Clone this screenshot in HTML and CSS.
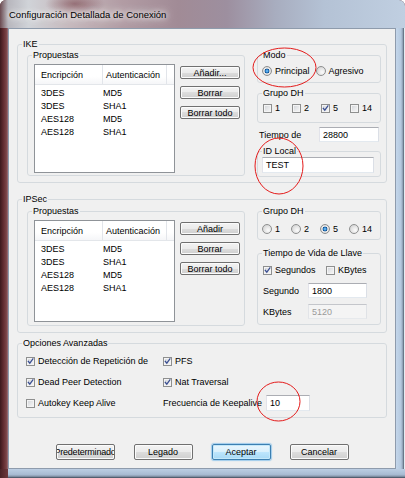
FILE: index.html
```html
<!DOCTYPE html>
<html lang="es">
<head>
<meta charset="utf-8">
<title>Configuración Detallada de Conexión</title>
<link rel="stylesheet" href="styles.css">
</head>
<body>
<div class="window">
  <div class="titlebar"><span class="title">Configuración Detallada de Conexión</span></div>
  <div class="frame-row">
    <div class="frame-left"></div>
    <div class="client">

      <fieldset class="group g-ike">
        <legend>IKE</legend>
        <div class="section sec-ike">
          <fieldset class="group g-prop">
            <legend>Propuestas</legend>
            <div class="prop-body pb-ike">
              <div class="listview lv-ike">
                <div class="lv-head"><span class="hc1">Encripción</span><span class="hc2">Autenticación</span></div>
                <div class="lv-rows">
                  <div class="lv-row"><span class="rc1">3DES</span><span class="rc2">MD5</span></div>
                  <div class="lv-row"><span class="rc1">3DES</span><span class="rc2">SHA1</span></div>
                  <div class="lv-row"><span class="rc1">AES128</span><span class="rc2">MD5</span></div>
                  <div class="lv-row"><span class="rc1">AES128</span><span class="rc2">SHA1</span></div>
                </div>
              </div>
              <div class="btn-col">
                <div class="btn">Añadir...</div>
                <div class="btn">Borrar</div>
                <div class="btn">Borrar todo</div>
              </div>
            </div>
          </fieldset>

          <div class="right-col">
            <fieldset class="group g-modo">
              <legend>Modo</legend>
              <div class="modo-body">
                <span class="opt"><span class="rb on"></span><span class="lbl">Principal</span></span>
                <span class="opt"><span class="rb"></span><span class="lbl">Agresivo</span></span>
              </div>
            </fieldset>
            <fieldset class="group g-dh1">
              <legend>Grupo DH</legend>
              <div class="dh-body dh-cb">
                <span class="opt"><span class="cb"></span><span class="lbl">1</span></span>
                <span class="opt"><span class="cb"></span><span class="lbl">2</span></span>
                <span class="opt"><span class="cb"><svg viewBox="0 0 9 9" class="tick"><path d="M1.6 4.2 L3.6 6.6 L7.6 1.2"/></svg></span><span class="lbl">5</span></span>
                <span class="opt"><span class="cb"></span><span class="lbl">14</span></span>
              </div>
            </fieldset>
            <div class="field-row tiempo-row">
              <span class="flabel">Tiempo de</span>
              <span class="tb tb-tiempo">28800</span>
            </div>
            <fieldset class="group g-idlocal">
              <legend>ID Local</legend>
              <div class="idlocal-body">
                <span class="tb tb-id">TEST</span>
              </div>
            </fieldset>
          </div>
        </div>
      </fieldset>

      <fieldset class="group g-ipsec">
        <legend>IPSec</legend>
        <div class="section sec-ipsec">
          <fieldset class="group g-prop">
            <legend>Propuestas</legend>
            <div class="prop-body pb-ipsec">
              <div class="listview lv-ipsec">
                <div class="lv-head"><span class="hc1">Encripción</span><span class="hc2">Autenticación</span></div>
                <div class="lv-rows">
                  <div class="lv-row"><span class="rc1">3DES</span><span class="rc2">MD5</span></div>
                  <div class="lv-row"><span class="rc1">3DES</span><span class="rc2">SHA1</span></div>
                  <div class="lv-row"><span class="rc1">AES128</span><span class="rc2">MD5</span></div>
                  <div class="lv-row"><span class="rc1">AES128</span><span class="rc2">SHA1</span></div>
                </div>
              </div>
              <div class="btn-col">
                <div class="btn">Añadir</div>
                <div class="btn">Borrar</div>
                <div class="btn">Borrar todo</div>
              </div>
            </div>
          </fieldset>

          <div class="right-col">
            <fieldset class="group g-dh2">
              <legend>Grupo DH</legend>
              <div class="dh-body dh-rb">
                <span class="opt"><span class="rb"></span><span class="lbl">1</span></span>
                <span class="opt"><span class="rb"></span><span class="lbl">2</span></span>
                <span class="opt"><span class="rb on"></span><span class="lbl">5</span></span>
                <span class="opt"><span class="rb"></span><span class="lbl">14</span></span>
              </div>
            </fieldset>
            <fieldset class="group g-vida">
              <legend>Tiempo de Vida de Llave</legend>
              <div class="vida-body">
                <div class="vida-checks">
                  <span class="opt"><span class="cb"><svg viewBox="0 0 9 9" class="tick"><path d="M1.6 4.2 L3.6 6.6 L7.6 1.2"/></svg></span><span class="lbl">Segundos</span></span>
                  <span class="opt"><span class="cb"></span><span class="lbl">KBytes</span></span>
                </div>
                <div class="field-row vida-row">
                  <span class="flabel vlabel">Segundo</span>
                  <span class="tb tb-vida">1800</span>
                </div>
                <div class="field-row vida-row vida-row2">
                  <span class="flabel vlabel">KBytes</span>
                  <span class="tb tb-vida disabled">5120</span>
                </div>
              </div>
            </fieldset>
          </div>
        </div>
      </fieldset>

      <fieldset class="group g-opts">
        <legend>Opciones Avanzadas</legend>
        <div class="opts-body">
          <span class="opt"><span class="cb"><svg viewBox="0 0 9 9" class="tick"><path d="M1.6 4.2 L3.6 6.6 L7.6 1.2"/></svg></span><span class="lbl">Detección de Repetición de</span></span>
          <span class="opt"><span class="cb"><svg viewBox="0 0 9 9" class="tick"><path d="M1.6 4.2 L3.6 6.6 L7.6 1.2"/></svg></span><span class="lbl">PFS</span></span>
          <span class="opt"><span class="cb"><svg viewBox="0 0 9 9" class="tick"><path d="M1.6 4.2 L3.6 6.6 L7.6 1.2"/></svg></span><span class="lbl">Dead Peer Detection</span></span>
          <span class="opt"><span class="cb"><svg viewBox="0 0 9 9" class="tick"><path d="M1.6 4.2 L3.6 6.6 L7.6 1.2"/></svg></span><span class="lbl">Nat Traversal</span></span>
          <span class="opt"><span class="cb"></span><span class="lbl">Autokey Keep Alive</span></span>
          <span class="field-row keep-row">
            <span class="flabel klabel">Frecuencia de Keepalive</span>
            <span class="tb tb-keep">10</span>
          </span>
        </div>
      </fieldset>

      <div class="dlg-buttons">
        <div class="btn dbtn btn-pre"><span>Predeterminado</span></div>
        <div class="btn dbtn">Legado</div>
        <div class="btn dbtn default">Aceptar</div>
        <div class="btn dbtn">Cancelar</div>
      </div>

    </div>
    <div class="frame-right"></div>
  </div>
  <div class="frame-bottom"></div>

  <svg class="marks" viewBox="0 0 405 478" width="405" height="478">
    <ellipse cx="284.5" cy="67.5" rx="31.5" ry="19.5"/>
    <ellipse cx="279" cy="166" rx="24" ry="28"/>
    <ellipse cx="278.5" cy="401.5" rx="21.5" ry="19.5"/>
  </svg>
</div>
</body>
</html>
```

FILE: styles.css
```css
* { box-sizing: border-box; }
html, body { margin: 0; padding: 0; }
body {
  width: 405px;
  height: 478px;
  overflow: hidden;
  background: #ffffff;
  font-family: "Liberation Sans", Arial, sans-serif;
  font-size: 9px;
  color: #000;
}

.window {
  position: relative;
  width: 405px;
  height: 478px;
  display: flex;
  flex-direction: column;
  border-radius: 6px 6px 0 0;
  overflow: hidden;
  background: #5a2c30;
}

.titlebar {
  flex: none;
  height: 28px;
  display: flex;
  align-items: center;
  padding-left: 9px;
  background:
    radial-gradient(ellipse 30px 12px at 75px 4px, rgba(110,50,60,0.55), rgba(110,50,60,0) 100%),
    linear-gradient(to right, #6b4a50 0, #b7b6bd 2%, #d0d3d8 7%, #c6b9bd 17%, #b29ca4 30%, #a18b96 44%, #9d8f9f 56%, #a8adbf 68%, #b4c2d5 80%, #c0cfe1 100%);
}
.title {
  font-size: 9.5px;
  color: #000;
  text-shadow: 0 0 5px #fff, 0 0 9px #fff, 0 0 13px rgba(255,255,255,0.9);
}

.frame-row { flex: 1; display: flex; min-height: 0; }
.frame-left {
  flex: none;
  width: 8px;
  background: linear-gradient(to right, #3b181c 0, #5e2a2f 40%, #7a4346 80%, #98707a 100%);
}
.frame-right {
  flex: none;
  width: 9px;
  background: linear-gradient(to right, #c4d6ea 0, #b5c9df 5px, #8899ad 7px, #4c5866 8px, #e6ebf1 8px);
}
.frame-bottom {
  flex: none;
  height: 9px;
  background:
    linear-gradient(to right, #4a2226 0, #6e383c 8px, rgba(0,0,0,0) 8px),
    linear-gradient(to bottom, #bccee3 0, #a9bcd3 60%, #8b9cb1 80%, #3c4756 100%);
}

.client {
  flex: 1;
  min-width: 0;
  background: #f0f0f0;
  border: 1px solid #8e9bac;
  padding: 10px 8px 0 8px;
  display: flex;
  flex-direction: column;
}

/* group boxes */
.group {
  margin: 0;
  padding: 0;
  min-width: 0;
  border: 1px solid #d5dade;
  border-radius: 3px;
}
.group > legend {
  margin-left: 4px;
  padding: 0 1px;
  line-height: 11px;
  font-size: 9px;
}

.section { display: flex; align-items: flex-start; gap: 12px; }
.sec-ike { padding: 0 5px 5px 9px; }
.sec-ipsec { padding: 1px 5px 6px 9px; }
.g-ipsec { margin-top: 11px; }

.g-prop { flex: none; width: 218px; }
.prop-body { display: flex; align-items: flex-start; }
.pb-ike { padding: 3px 4px 2px 6px; }
.pb-ipsec { padding: 3px 4px 3px 6px; }

/* list view */
.listview {
  flex: none;
  width: 141px;
  background: #fff;
  border: 1px solid #8f9398;
}
.lv-ike { height: 109px; }
.lv-ipsec { height: 102px; }
.lv-head {
  display: flex;
  height: 20px;
  align-items: stretch;
  border-bottom: 1px solid #e3e6ea;
  background: linear-gradient(#ffffff 0, #ffffff 60%, #f5f6f8 100%);
}
.lv-head span { display: flex; align-items: center; }
.hc1 { width: 68px; padding-left: 6px; border-right: 1px solid #e2e5ea; }
.hc2 { width: 64px; padding-left: 3px; border-right: 1px solid #e2e5ea; }
.lv-rows { padding-top: 1px; }
.lv-row { display: flex; height: 13px; align-items: center; }
.rc1 { width: 68px; padding-left: 6px; }

.btn-col {
  flex: none;
  display: flex;
  flex-direction: column;
  gap: 7px;
  margin-left: 5px;
  margin-top: 2px;
  width: 60px;
}

/* buttons */
.btn {
  height: 13px;
  border: 1px solid #707070;
  border-radius: 2px;
  background: linear-gradient(#f3f3f3 0, #ebebeb 50%, #dddddd 50%, #cfcfcf 100%);
  box-shadow: inset 0 0 0 1px #fbfbfb;
  display: flex;
  align-items: center;
  justify-content: center;
  overflow: hidden;
  white-space: nowrap;
  font-size: 9px;
}
.btn-pre span { letter-spacing: -0.2px; }

/* right column */
.right-col {
  flex: none;
  width: 124px;
  display: flex;
  flex-direction: column;
}
.opt { display: flex; align-items: center; white-space: nowrap; }
.opt .lbl { margin-left: 3px; }

.modo-body {
  display: flex;
  align-items: center;
  gap: 6px;
  padding: 4px 0 5px 4px;
  box-sizing: content-box;
  height: 12px;
}

.g-dh1 { margin-top: 5px; }
.dh-body {
  display: grid;
  grid-template-columns: repeat(4, 29px);
  align-items: center;
  height: 12px;
  box-sizing: content-box;
}
.dh-cb { padding: 3px 0 8px 5px; }
.dh-rb { padding: 6px 0 4px 4px; }

.field-row { display: flex; align-items: center; }
.tiempo-row { margin-top: 4px; height: 15px; }
.tiempo-row .flabel { padding-left: 2px; }
.tb {
  display: flex;
  align-items: center;
  height: 15px;
  background: #fff;
  border: 1px solid;
  border-color: #abadb3 #dbdfe6 #e3e9ef #e2e3ea;
  padding-left: 3px;
  white-space: nowrap;
}
.tb-tiempo { width: 60px; margin-left: auto; margin-right: 2px; }

.g-idlocal { margin-top: 4px; }
.idlocal-body { padding: 0 6px 3px 4px; }
.tb-id { height: 16px; }

.g-vida { margin-top: 8px; }
.vida-body { padding: 5px 0 5px 5px; }
.vida-checks {
  display: grid;
  grid-template-columns: 63px auto;
  height: 12px;
  align-items: center;
}
.vida-row { margin-top: 7px; height: 15px; }
.vida-row2 { margin-top: 6px; }
.vlabel { width: 45px; }
.tb-vida { width: 59px; }
.tb.disabled {
  background: #f4f4f4;
  color: #9a9a9a;
  border-color: #c4c6cb #dfe2e6 #e6e9ec #e2e4e8;
}

/* advanced options */
.g-opts { margin-top: 5px; }
.opts-body {
  display: grid;
  grid-template-columns: 137px auto;
  grid-auto-rows: 16px;
  row-gap: 5px;
  align-items: center;
  padding: 4px 0 6px 8px;
}
.klabel { width: 100px; white-space: nowrap; }
.tb-keep { width: 44px; height: 16px; margin-left: 3px; }

/* checkbox / radio */
.cb {
  flex: none;
  position: relative;
  width: 9px;
  height: 9px;
  border: 1px solid #8e8f8f;
  background: linear-gradient(135deg, #cfd2d7 0, #e6e7e9 50%, #f8f8f8 100%);
  box-shadow: inset 0 0 0 1px #f4f4f4;
}
.tick { display: block; width: 7px; height: 7px; }
.tick path { fill: none; stroke: #3b4f92; stroke-width: 1.6; stroke-linecap: square; }
.rb {
  flex: none;
  width: 10px;
  height: 10px;
  border-radius: 50%;
  border: 1px solid #8e8f8f;
  background: radial-gradient(circle at 65% 65%, #fbfbfb 0, #e4e4e4 50%, #c9c9c9 100%);
}
.rb.on {
  background: radial-gradient(circle closest-side, #8fd3ff 0, #2a86d4 35%, #123f73 58%, #f4f4f4 66%, #d8d8d8 100%);
}

/* dialog buttons */
.dlg-buttons {
  display: flex;
  justify-content: center;
  gap: 19px;
  margin-top: 26px;
}
.dbtn { width: 59px; height: 16px; }
.dbtn.default {
  border-color: #3c7fb1;
  background: linear-gradient(#eaf6fd 0, #d9f0fc 50%, #bee6fd 50%, #a7d9f5 100%);
  box-shadow: inset 0 0 0 1px #c4e8fa, 0 0 1px 1px rgba(60,160,230,0.45);
}

/* annotation overlay */
.marks {
  position: absolute;
  left: 0;
  top: 0;
  pointer-events: none;
}
.marks ellipse { fill: none; stroke: #e41b1b; stroke-width: 1; }
```
